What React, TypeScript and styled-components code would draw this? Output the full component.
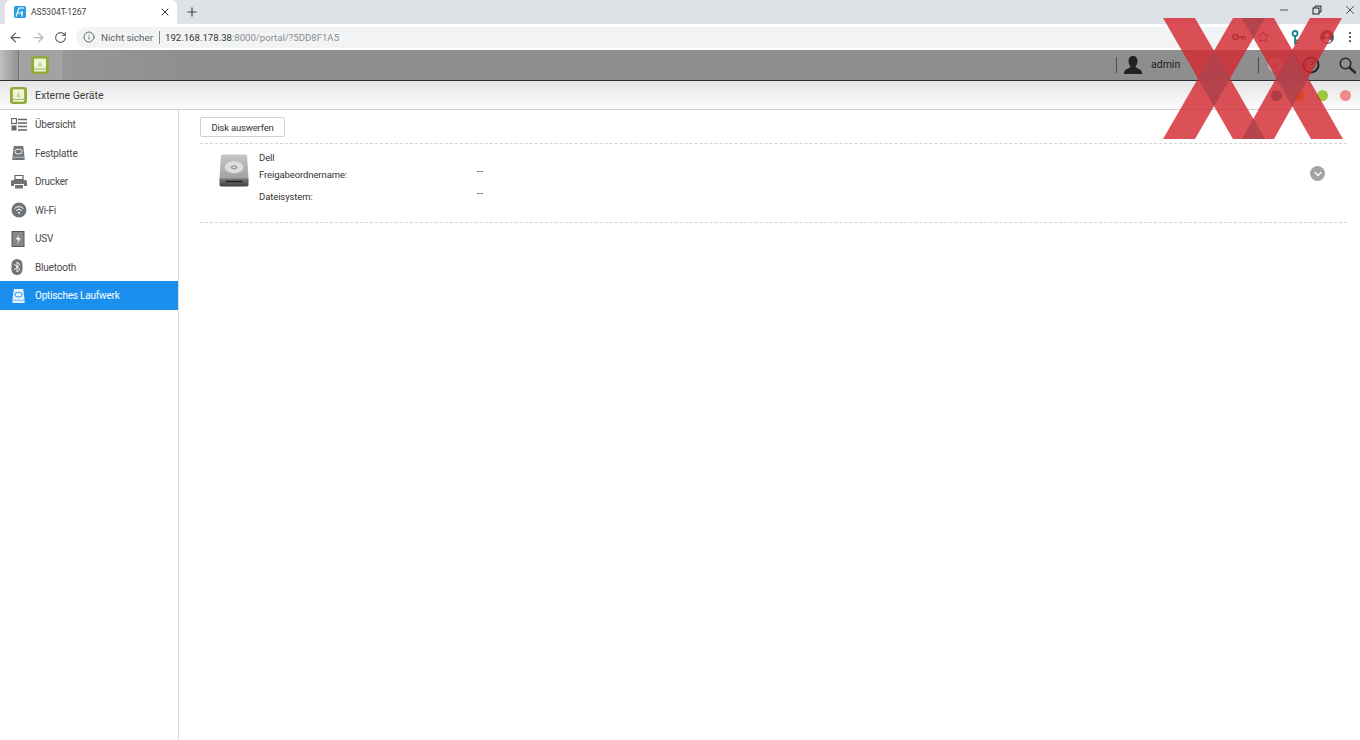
import React from "react";
import styled, { createGlobalStyle } from "styled-components";
import { ArrowLeft, ArrowRight, RotateCw, Info, Plus, X, Minus, Star, EllipsisVertical, ChevronDown } from "lucide-react";

const GlobalStyle = createGlobalStyle`
  html, body {
    margin: 0;
    padding: 0;
    height: 100%;
    background: #fff;
    overflow: hidden;
  }
  body {
    font-family: "Roboto", "Open Sans", "Liberation Sans", sans-serif;
  }
`;

function DriveIcon({ fill = "#6f7478", disc = "#fff" }: { fill?: string; disc?: string }) {
  return (
    <svg width="15" height="16" viewBox="0 0 16 16">
      <path d="M3 0.500h10l1.500 12v3h-13v-3z" fill={fill} />
      <ellipse cx="8" cy="6.500" rx="4" ry="2.600" fill="none" stroke={disc} strokeWidth="1" />
      <rect x="1.500" y="12" width="13" height="1" fill={disc} opacity="0.6" />
    </svg>
  );
}

function OverviewIcon() {
  return (
    <svg width="16" height="13" viewBox="0 0 16 13">
      <rect x="0.500" y="0.500" width="5" height="5" fill="none" stroke="#5f6468" strokeWidth="1.200" />
      <rect x="0.500" y="7.500" width="5" height="5" fill="#5f6468" />
      <path d="M7 1.500h9M7 5h9M7 8.500h9M7 12h9" stroke="#5f6468" strokeWidth="1.300" />
    </svg>
  );
}

function PrinterIcon() {
  return (
    <svg width="16" height="14" viewBox="0 0 16 14">
      <path d="M4 0.500h8v4H4z" fill="none" stroke="#5f6468" strokeWidth="1.200" />
      <path d="M1.500 5h13A1.500 1.500 0 0 1 16 6.500V11h-3V9H3v2H0V6.500A1.500 1.500 0 0 1 1.500 5z" fill="#6f7478" />
      <path d="M4 10h8v3.500H4z" fill="#6f7478" />
    </svg>
  );
}

function WifiIcon() {
  return (
    <svg width="16" height="16" viewBox="0 0 16 16">
      <circle cx="8" cy="8" r="7.500" fill="#6f7478" />
      <path d="M3.500 6.500a6.500 6.500 0 0 1 9 0M5.200 8.500a4 4 0 0 1 5.600 0" fill="none" stroke="#fff" strokeWidth="1" />
      <circle cx="8" cy="10.800" r="1" fill="#fff" />
    </svg>
  );
}

function UpsIcon() {
  return (
    <svg width="14" height="16" viewBox="0 0 14 16">
      <rect x="1" y="0.500" width="12" height="15" fill="#85898d" stroke="#55595c" />
      <path d="M8 3L5 8.500h2.500L6.500 13 9.500 7H7z" fill="#fff" />
    </svg>
  );
}

function BluetoothIcon() {
  return (
    <svg width="12" height="16" viewBox="0 0 12 16">
      <rect x="0.500" y="0" width="11" height="16" rx="5.500" fill="#6f7478" />
      <path d="M3 5l6 5.500L6 13V3l3 2.500L3 11" fill="none" stroke="#fff" strokeWidth="0.900" />
    </svg>
  );
}

function AppIcon({ size }: { size: number }) {
  return (
    <svg width={size} height={size} viewBox="0 0 18 18">
      <rect width="18" height="18" rx="3.500" fill="#8fa93a" />
      <rect x="3" y="2.500" width="12" height="13" rx="1" fill="#eef3d4" />
      <path d="M9 5l2 5.500H7z" fill="#c3cf9a" />
      <rect x="3" y="12.500" width="12" height="1.200" fill="#a8bd68" />
    </svg>
  );
}

function FaviconIcon() {
  return (
    <svg width="12" height="12" viewBox="0 0 12 12">
      <rect width="12" height="12" rx="1.500" fill="#2b9fe0" />
      <path d="M2 10.500L5 2h5M4 7h5M8 5v5.500" fill="none" stroke="#fff" strokeWidth="1.200" />
    </svg>
  );
}

function DiskImage() {
  return (
    <svg width="30" height="33" viewBox="0 0 32 35">
      <defs>
        <linearGradient id="driveBody" x1="0" y1="0" x2="0" y2="1">
          <stop offset="0" stopColor="#c6c6c6" />
          <stop offset="1" stopColor="#a0a0a0" />
        </linearGradient>
        <linearGradient id="driveBase" x1="0" y1="0" x2="0" y2="1">
          <stop offset="0" stopColor="#77797b" />
          <stop offset="1" stopColor="#3e4042" />
        </linearGradient>
      </defs>
      <path d="M4 0.500h24a2 2 0 0 1 2 2L31.500 27H.500L2 2.500a2 2 0 0 1 2-2z" fill="url(#driveBody)" />
      <ellipse cx="16" cy="14" rx="10" ry="6.500" fill="#dedede" />
      <ellipse cx="16" cy="14" rx="3.500" ry="2.200" fill="#9a9a9a" />
      <ellipse cx="16" cy="14" rx="1.500" ry="0.900" fill="#e6e6e6" />
      <path d="M.500 26h31v6.500a2 2 0 0 1-2 2h-27a2 2 0 0 1-2-2z" fill="url(#driveBase)" />
      <rect x="7" y="28.500" width="18" height="1.500" rx="0.700" fill="#1d1e1f" />
    </svg>
  );
}

function RestoreIcon() {
  return (
    <svg width="10" height="10" viewBox="0 0 10 10" fill="none" stroke="#222" strokeWidth="1">
      <rect x="1" y="3" width="6" height="6" />
      <path d="M3 3V1h6v6H7" />
    </svg>
  );
}

function UserIcon() {
  return (
    <svg width="18" height="18" viewBox="0 0 18 18">
      <path d="M9 0c3 0 4.500 2 4.500 5S11.800 10 11.500 11c.3 1 6.500 2 6.500 6v1H0v-1c0-4 6.200-5 6.500-6C6.200 10 4.500 8 4.500 5S6 0 9 0z" fill="#222" />
    </svg>
  );
}

function PasswordKeyIcon() {
  return (
    <svg width="14" height="8" viewBox="0 0 14 8" fill="none" stroke="#444" strokeWidth="1.500">
      <circle cx="3.500" cy="4" r="2.500" />
      <path d="M6 4h7.500M10 4v3M13 4v2.500" />
    </svg>
  );
}

function ExtensionKeyIcon() {
  return (
    <svg width="8" height="15" viewBox="0 0 8 15" fill="none" stroke="#15868c" strokeWidth="1.800">
      <circle cx="4" cy="3.500" r="2.500" />
      <path d="M4 6v8.500M4 10.500h3M4 13h2.500" />
    </svg>
  );
}

function ProfileIcon() {
  return (
    <svg width="14" height="14" viewBox="0 0 14 14">
      <circle cx="7" cy="7" r="7" fill="#555" />
      <circle cx="7" cy="5.200" r="2.200" fill="#e8e8e8" />
      <path d="M2.500 11c1-2 2.800-2.800 4.500-2.800s3.500.8 4.500 2.800A6 6 0 0 1 2.500 11z" fill="#e8e8e8" />
    </svg>
  );
}

function NoticeIcon() {
  return (
    <svg width="16" height="16" viewBox="0 0 16 16">
      <circle cx="8" cy="8" r="7" fill="#b8b8b8" />
      <circle cx="8" cy="8" r="4" fill="#9a9a9a" />
    </svg>
  );
}

function GaugeIcon() {
  return (
    <svg width="18" height="18" viewBox="0 0 18 18" fill="none">
      <circle cx="9" cy="9" r="7.500" stroke="#222" strokeWidth="2" />
      <circle cx="9" cy="9" r="4" stroke="#555" strokeWidth="1.200" />
      <path d="M9 9l4-4" stroke="#222" strokeWidth="1.500" />
    </svg>
  );
}

function SearchIcon() {
  return (
    <svg width="17" height="17" viewBox="0 0 17 17" fill="none">
      <circle cx="6.500" cy="6.500" r="5.300" stroke="#2a2a2a" strokeWidth="1.500" />
      <path d="M10.500 10.500l5.500 5" stroke="#2a2a2a" strokeWidth="2.600" strokeLinecap="round" />
    </svg>
  );
}

const navItems = [
  { label: "Übersicht", icon: <OverviewIcon /> },
  { label: "Festplatte", icon: <DriveIcon /> },
  { label: "Drucker", icon: <PrinterIcon /> },
  { label: "Wi-Fi", icon: <WifiIcon /> },
  { label: "USV", icon: <UpsIcon /> },
  { label: "Bluetooth", icon: <BluetoothIcon /> },
  { label: "Optisches Laufwerk", icon: <DriveIcon fill="#e6f3fd" disc="#1a8fee" />, active: true },
];

const dots = ["#1f8ea0", "#ffc800", "#9cc63c", "#f08a8e"];

export default function App() {
  return (
    <Page>
      <GlobalStyle />
      <TabStrip>
        <Tab>
          <FaviconIcon />
          <TabTitle>AS5304T-1267</TabTitle>
          <X size={12} strokeWidth={2} color="#333" />
        </Tab>
        <NewTab>
          <Plus size={14} strokeWidth={2} color="#3c4043" />
        </NewTab>
        <WindowControls>
          <WindowControl>
            <Minus size={12} strokeWidth={1.5} />
          </WindowControl>
          <WindowControl>
            <RestoreIcon />
          </WindowControl>
          <WindowControl>
            <X size={14} strokeWidth={1.3} />
          </WindowControl>
        </WindowControls>
      </TabStrip>

      <Toolbar>
        <ArrowLeft size={15} strokeWidth={2} color="#5a5e62" />
        <ArrowRight size={15} strokeWidth={2} color="#b4b7ba" />
        <RotateCw size={13} strokeWidth={2} color="#5a5e62" />
        <AddressBar>
          <Info size={12} strokeWidth={1.8} color="#5a5e62" />
          <SecurityLabel>Nicht sicher</SecurityLabel>
          <UrlDivider />
          <UrlHost>192.168.178.38</UrlHost>
          <UrlRest>:8000/portal/?5DD8F1A5</UrlRest>
          <AddressActions>
            <PasswordKeyIcon />
            <Star size={12} color="#555" />
          </AddressActions>
        </AddressBar>
        <ToolbarEnd>
          <ExtensionKeyIcon />
          <ProfileSlot>
            <ProfileIcon />
          </ProfileSlot>
          <EllipsisVertical size={14} color="#5a5e62" />
        </ToolbarEnd>
      </Toolbar>

      <AppBar>
        <BarEdge />
        <ActiveApp>
          <AppIcon size={18} />
        </ActiveApp>
        <AppBarRight>
          <BarDivider />
          <UserSlot>
            <UserIcon />
          </UserSlot>
          <UserName>admin</UserName>
          <BarDivider />
          <BarIcons>
            <NoticeIcon />
            <GaugeIcon />
            <SearchIcon />
          </BarIcons>
        </AppBarRight>
      </AppBar>

      <TitleBar>
        <AppIcon size={17} />
        <TitleText>Externe Geräte</TitleText>
        <Dots>
          {dots.map((c) => (
            <Dot key={c} $color={c} />
          ))}
        </Dots>
      </TitleBar>

      <Body>
        <Sidebar>
          {navItems.map((item) => (
            <NavRow key={item.label} $active={item.active}>
              <NavIcon>{item.icon}</NavIcon>
              {item.label}
            </NavRow>
          ))}
        </Sidebar>

        <Content>
          <ButtonRow>
            <EjectButton>Disk auswerfen</EjectButton>
          </ButtonRow>
          <DiskRow>
            <DiskIconCell>
              <DiskImage />
            </DiskIconCell>
            <DiskInfo>
              <DiskName>Dell</DiskName>
              <InfoRow>
                <InfoLabel>Freigabeordnername:</InfoLabel>
                <InfoValue>--</InfoValue>
              </InfoRow>
              <InfoRow>
                <InfoLabel>Dateisystem:</InfoLabel>
                <InfoValue>--</InfoValue>
              </InfoRow>
            </DiskInfo>
            <ExpandButton>
              <ChevronDown size={12} strokeWidth={2.6} color="#fff" />
            </ExpandButton>
          </DiskRow>
        </Content>
      </Body>

      <Watermark viewBox="0 0 180 122" width="180" height="122">
        <g fill="rgb(212,40,49)" fillOpacity="0.81">
          <path d="M0 0h32l70 121H70z" />
          <path d="M70 0h32L32 121H0z" />
          <path d="M79 0h32l69 121h-32z" />
          <path d="M147 0h32l-68 121H79z" />
        </g>
        <g fill="rgb(130,100,110)" fillOpacity="0.4">
          <path d="M51 32.800L67 60.500 51 88.200 35 60.500z" />
          <path d="M129 32.800L145 60.500 129 88.200 113 60.500z" />
          <path d="M79 0h23L90.400 20z" />
          <path d="M90.300 100.800L102 121H79z" />
        </g>
      </Watermark>
    </Page>
  );
}

const Page = styled.div`
  position: relative;
  width: 1360px;
  height: 740px;
  display: flex;
  flex-direction: column;
  overflow: hidden;
  background: #fff;
`;

const TabStrip = styled.div`
  height: 24px;
  display: flex;
  align-items: stretch;
  background: #dee1e6;
  flex: none;
`;

const Tab = styled.div`
  width: 172px;
  margin-left: 5px;
  padding: 0 6px 0 9px;
  box-sizing: border-box;
  display: flex;
  align-items: center;
  background: #fff;
  border-radius: 6px 6px 0 0;
`;

const TabTitle = styled.span`
  flex: 1;
  margin-left: 5px;
  font-size: 8.5px;
  color: #3c4043;
`;

const NewTab = styled.div`
  width: 30px;
  display: flex;
  align-items: center;
  justify-content: center;
`;

const WindowControls = styled.div`
  margin-left: auto;
  display: flex;
  color: #222;
  margin-right: -6px;
`;

const WindowControl = styled.div`
  width: 33px;
  height: 20px;
  display: flex;
  align-items: center;
  justify-content: center;
`;

const Toolbar = styled.div`
  height: 26px;
  display: flex;
  align-items: center;
  gap: 8px;
  padding: 0 3px 0 8px;
  box-sizing: border-box;
  background: #fff;
  flex: none;
`;

const AddressBar = styled.div`
  flex: 1;
  height: 21px;
  margin-left: 1px;
  padding: 0 10px 0 7px;
  display: flex;
  align-items: center;
  background: #f1f3f4;
  border-radius: 11px;
  font-size: 9.8px;
  white-space: nowrap;
`;

const SecurityLabel = styled.span`
  margin-left: 6px;
  color: #5a5e62;
`;

const UrlDivider = styled.span`
  width: 1px;
  height: 13px;
  margin: 0 5px 0 6px;
  background: #8a8d90;
`;

const UrlHost = styled.span`
  font-size: 9.6px;
  color: #333;
`;

const UrlRest = styled.span`
  font-size: 9.6px;
  color: #8a8d90;
`;

const AddressActions = styled.div`
  margin-left: auto;
  margin-right: 4px;
  display: flex;
  align-items: center;
  gap: 11px;
`;

const ToolbarEnd = styled.div`
  display: flex;
  align-items: center;
`;

const ProfileSlot = styled.span`
  display: flex;
  margin: 0 9px 0 21px;
`;

const AppBar = styled.div`
  height: 31px;
  display: flex;
  align-items: stretch;
  background: linear-gradient(90deg, #9b9b9b, #8e8e8e 200px, #8e8e8e);
  border-bottom: 1px solid #2f2f2f;
  box-sizing: border-box;
  flex: none;
`;

const BarEdge = styled.div`
  width: 18px;
  background: linear-gradient(90deg, #c0c0c0, #929292);
`;

const ActiveApp = styled.div`
  width: 44px;
  display: flex;
  align-items: center;
  justify-content: center;
  border-left: 1px solid #777;
  border-right: 1px solid #a8a8a8;
  box-sizing: border-box;
  background: #a2a2a2;
`;

const AppBarRight = styled.div`
  margin-left: auto;
  display: flex;
  align-items: center;
`;

const BarDivider = styled.span`
  width: 1px;
  height: 16px;
  background: #4a4a4a;
`;

const UserSlot = styled.span`
  margin-left: 7px;
  display: flex;
`;

const UserName = styled.span`
  width: 107px;
  margin-left: 9px;
  font-size: 10.5px;
  color: #222;
  line-height: 1;
`;

const BarIcons = styled.div`
  display: flex;
  align-items: center;
  gap: 19px;
  padding: 0 4px 0 8px;
`;

const TitleBar = styled.div`
  height: 29px;
  padding: 0 6px 0 10px;
  display: flex;
  align-items: center;
  background: linear-gradient(#e6e6e6, #fbfbfb);
  border-bottom: 1px solid #d2d2d2;
  box-sizing: border-box;
  flex: none;
`;

const TitleText = styled.span`
  margin-left: 8px;
  font-size: 10.5px;
  color: #3d3d3d;
`;

const Dots = styled.div`
  margin-left: auto;
  display: flex;
  gap: 12px;
  margin-right: 3px;
`;

const Dot = styled.span<{ $color: string }>`
  width: 11px;
  height: 11px;
  border-radius: 50%;
  background: ${(p) => p.$color};
`;

const Body = styled.div`
  flex: 1;
  display: flex;
  min-height: 0;
`;

const Sidebar = styled.nav`
  width: 179px;
  flex: none;
  border-right: 1px solid #dcdcdc;
  box-sizing: border-box;
`;

const NavRow = styled.div<{ $active?: boolean }>`
  height: 28.5px;
  padding: 1px 0 0 11px;
  box-sizing: border-box;
  display: flex;
  align-items: center;
  font-size: 10px;
  letter-spacing: -0.2px;
  color: ${(p) => (p.$active ? "#fff" : "#4a4a4a")};
  background: ${(p) => (p.$active ? "#1a8fee" : "transparent")};
`;

const NavIcon = styled.span`
  width: 24px;
  display: flex;
  align-items: center;
`;

const Content = styled.main`
  flex: 1;
  padding: 7px 13px 0 21px;
  min-width: 0;
`;

const ButtonRow = styled.div`
  height: 26px;
  border-bottom: 1px dashed #d4d4d4;
`;

const EjectButton = styled.button`
  display: block;
  width: 85px;
  height: 20px;
  padding: 0;
  background: #fff;
  border: 1px solid #d0d0d0;
  border-radius: 2px;
  font-family: inherit;
  font-size: 9.5px;
  letter-spacing: -0.2px;
  color: #333;
`;

const DiskRow = styled.div`
  height: 78px;
  padding-left: 19px;
  display: flex;
  align-items: flex-start;
  border-bottom: 1px dashed #d4d4d4;
`;

const DiskIconCell = styled.div`
  width: 40px;
  padding-top: 10px;
  flex: none;
`;

const DiskInfo = styled.div`
  flex: 1;
  padding-top: 7px;
  font-size: 9.5px;
  letter-spacing: -0.1px;
  color: #333;
`;

const DiskName = styled.div`
  line-height: 13px;
`;

const InfoRow = styled.div`
  display: flex;
  height: 21.5px;
  align-items: center;
`;

const InfoLabel = styled.span`
  width: 218px;
  flex: none;
`;

const InfoValue = styled.span`
  position: relative;
  top: -4px;
  letter-spacing: 0.5px;
`;

const ExpandButton = styled.span`
  width: 15px;
  height: 15px;
  margin: 22px 22px 0 0;
  display: flex;
  align-items: center;
  justify-content: center;
  border-radius: 50%;
  background: #a4a4a4;
`;

const Watermark = styled.svg`
  position: absolute;
  left: 1163px;
  top: 18px;
`;
